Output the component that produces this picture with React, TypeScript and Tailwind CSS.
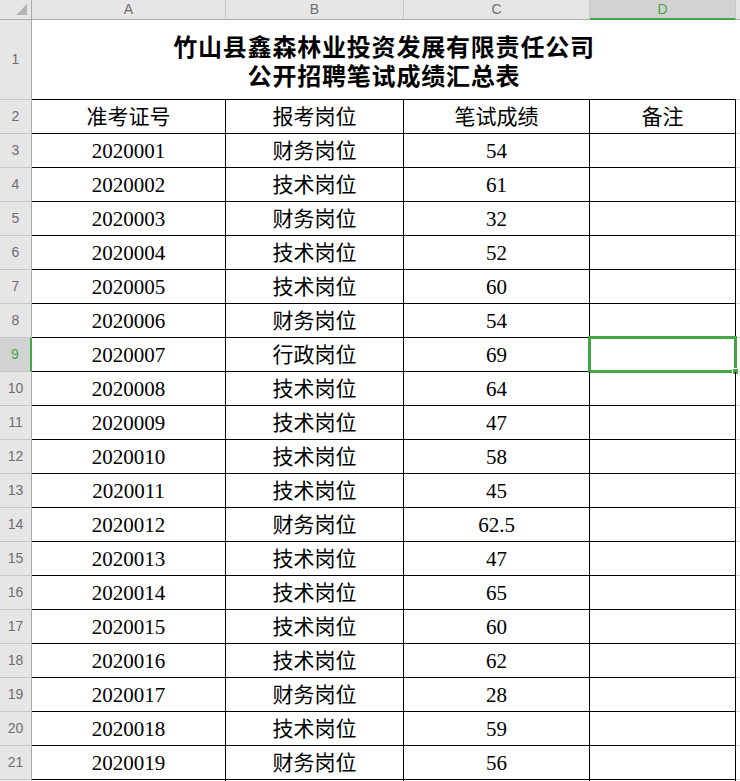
import React from 'react';

const rows: [string, string, string][] = [
  ['2020001', '财务岗位', '54'],
  ['2020002', '技术岗位', '61'],
  ['2020003', '财务岗位', '32'],
  ['2020004', '技术岗位', '52'],
  ['2020005', '技术岗位', '60'],
  ['2020006', '财务岗位', '54'],
  ['2020007', '行政岗位', '69'],
  ['2020008', '技术岗位', '64'],
  ['2020009', '技术岗位', '47'],
  ['2020010', '技术岗位', '58'],
  ['2020011', '技术岗位', '45'],
  ['2020012', '财务岗位', '62.5'],
  ['2020013', '技术岗位', '47'],
  ['2020014', '技术岗位', '65'],
  ['2020015', '技术岗位', '60'],
  ['2020016', '技术岗位', '62'],
  ['2020017', '财务岗位', '28'],
  ['2020018', '技术岗位', '59'],
  ['2020019', '财务岗位', '56'],
];

const cellFont = { fontFamily: '"Liberation Serif", "Noto Sans CJK SC", serif' };
const uiFont = { fontFamily: '"Liberation Sans", Arial, sans-serif' };

function RowHead({ n, active = false, h = 'h-[34px]' }: { n?: number; active?: boolean; h?: string }) {
  return (
    <div
      className={
        active
          ? `w-[32px] ${h} shrink-0 flex items-center justify-center bg-[#d2d2d2] border-b border-b-[#c6c6c6] border-r-2 border-r-[#44a647] text-[14px] text-[#44a647]`
          : `w-[32px] ${h} shrink-0 flex items-center justify-center bg-[#e6e6e6] border-b border-b-[#c6c6c6] border-r border-r-[#ababab] text-[14px] text-[#6e6e6e]`
      }
      style={uiFont}
    >
      {n}
    </div>
  );
}

function Cell({ w, children, selected = false }: { w: string; children?: React.ReactNode; selected?: boolean }) {
  return (
    <div
      className={`${w} h-[34px] shrink-0 relative flex items-center justify-center pt-[3px] border-r border-b border-black text-[21px] text-black`}
      style={cellFont}
    >
      {children}
      {selected && (
        <>
          <div className="absolute left-[-2px] top-[-2px] w-[149px] h-[37px] border-[3px] border-[#44a647]" />
          <div className="absolute left-[142px] top-[30px] w-[7px] h-[7px] bg-[#44a647] border border-white" />
        </>
      )}
    </div>
  );
}

function Tail() {
  return <div className="flex-1 h-[34px] border-b border-[#d4d4d4]" />;
}

export default function App() {
  return (
    <div className="w-[740px] h-[781px] overflow-hidden bg-white">
      {/* column letters */}
      <div className="flex h-[20px]" style={uiFont}>
        <div className="w-[32px] shrink-0 bg-[#e6e6e6] border-r border-b border-[#ababab] relative">
          <svg className="absolute left-0 top-0" width="31" height="19" viewBox="0 0 31 19">
            <polygon points="16,15 27,4 27,15" fill="#b4b4b4" />
          </svg>
        </div>
        <div className="w-[194px] shrink-0 flex items-center justify-center bg-[#e6e6e6] border-r border-r-[#c8c8c8] border-b border-b-[#ababab] text-[14px] text-[#6e6e6e]">A</div>
        <div className="w-[178px] shrink-0 flex items-center justify-center bg-[#e6e6e6] border-r border-r-[#c8c8c8] border-b border-b-[#ababab] text-[14px] text-[#6e6e6e]">B</div>
        <div className="w-[186px] shrink-0 flex items-center justify-center bg-[#e6e6e6] border-r border-r-[#c8c8c8] border-b border-b-[#ababab] text-[14px] text-[#6e6e6e]">C</div>
        <div className="w-[146px] shrink-0 flex items-center justify-center bg-[#d2d2d2] border-r border-r-[#c8c8c8] border-b-2 border-b-[#44a647] text-[14px] text-[#44a647]">D</div>
        <div className="flex-1 bg-[#e6e6e6] border-b border-[#ababab]" />
      </div>

      {/* title row */}
      <div className="flex h-[80px]">
        <RowHead n={1} h="h-[80px]" />
        <div
          className="w-[704px] shrink-0 flex flex-col items-center justify-center pt-[6px] border-b border-black text-[24px] font-bold leading-[29px] tracking-[0.8px] text-black"
          style={cellFont}
        >
          <div>竹山县鑫森林业投资发展有限责任公司</div>
          <div>公开招聘笔试成绩汇总表</div>
        </div>
        <div className="flex-1 border-b border-[#d4d4d4]" />
      </div>

      {/* column titles */}
      <div className="flex">
        <RowHead n={2} />
        <Cell w="w-[194px]">准考证号</Cell>
        <Cell w="w-[178px]">报考岗位</Cell>
        <Cell w="w-[186px]">笔试成绩</Cell>
        <Cell w="w-[146px]">备注</Cell>
        <Tail />
      </div>

      {rows.map(([id, post, score], i) => (
        <div key={id} className="flex">
          <RowHead n={i + 3} active={i + 3 === 9} />
          <Cell w="w-[194px]">{id}</Cell>
          <Cell w="w-[178px]">{post}</Cell>
          <Cell w="w-[186px]">{score}</Cell>
          <Cell w="w-[146px]" selected={i + 3 === 9} />
          <Tail />
        </div>
      ))}

      {/* next row, only its top edge is in view */}
      <div className="flex">
        <RowHead />
        <Cell w="w-[194px]" />
        <Cell w="w-[178px]" />
        <Cell w="w-[186px]" />
        <Cell w="w-[146px]" />
        <Tail />
      </div>
    </div>
  );
}
